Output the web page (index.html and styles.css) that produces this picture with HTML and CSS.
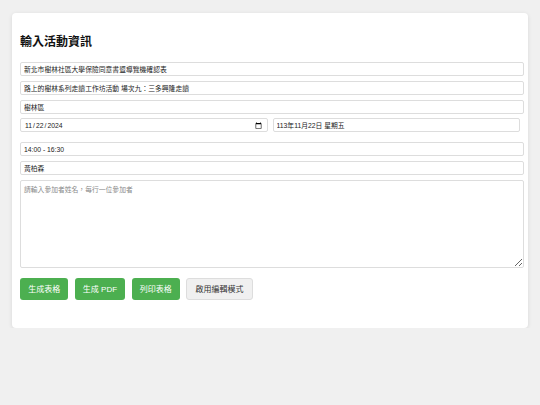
FILE: index.html
```html
<!DOCTYPE html>
<html lang="zh-Hant">
<head>
<meta charset="utf-8">
<title>輸入活動資訊</title>
<link rel="stylesheet" href="styles.css">
</head>
<body>
<div class="card">
  <h2 class="title">輸入活動資訊</h2>
  <input class="field" type="text" value="新北市樹林社區大學保險同意書暨導覽機確認表">
  <input class="field" type="text" value="路上的樹林系列走讀工作坊活動 場次九：三多興隆走讀">
  <input class="field" type="text" value="樹林區">
  <div class="date-row">
    <input class="field half" type="date" value="2024-11-22">
    <input class="field half" type="text" value="113年11月22日 星期五">
  </div>
  <input class="field" type="text" value="14:00 - 16:30">
  <input class="field" type="text" value="黃柏森">
  <textarea class="field area" placeholder="請輸入參加者姓名，每行一位參加者"></textarea>
  <div class="actions">
    <button class="btn green">生成表格</button>
    <button class="btn green">生成 PDF</button>
    <button class="btn green">列印表格</button>
    <button class="btn gray">啟用編輯模式</button>
  </div>
</div>
</body>
</html>
```

FILE: styles.css
```css
* { box-sizing: border-box; }
html, body {
  margin: 0;
  padding: 0;
  background: #f0f0f0;
  font-family: "Liberation Sans", "Noto Sans CJK TC", sans-serif;
}
body { padding-top: 13px; }
.card {
  width: 516px;
  height: 315px;
  margin: 0 12px;
  background: #fff;
  border-radius: 4px;
  box-shadow: 0 1px 4px rgba(0, 0, 0, 0.1);
  padding: 22px 8px 28px;
}
.title {
  margin: 0 0 13px;
  font-size: 12px;
  line-height: 14px;
  font-weight: bold;
  color: #111;
}
.field {
  display: block;
  width: 504px;
  height: 14px;
  margin: 0 0 4.75px;
  padding: 0 3px;
  border: 1px solid #ddd;
  border-radius: 2px;
  background: #fff;
  font-family: "Liberation Sans", "Noto Sans CJK TC", sans-serif;
  font-size: 6.8px;
  color: #1a1a1a;
  outline: none;
}
.date-row {
  display: flex;
  gap: 5px;
  width: 500px;
  margin-bottom: 10px;
}
.date-row .half {
  flex: 1 1 0;
  width: auto;
  min-width: 0;
  margin: 0;
}
.area {
  height: 88px;
  padding: 3px;
  resize: vertical;
  margin-bottom: 10px;
}
.area::placeholder { color: #8a8a8a; }
.actions {
  display: flex;
  gap: 6.3px;
}
.btn {
  height: 22px;
  padding: 0 8.2px;
  border-radius: 3px;
  font-family: "Liberation Sans", "Noto Sans CJK TC", sans-serif;
  font-size: 8px;
  cursor: pointer;
}
.green {
  background: #4caf50;
  color: #fff;
  border: none;
}
.gray {
  background: #f0f0f0;
  color: #333;
  border: 1px solid #ddd;
}
```
